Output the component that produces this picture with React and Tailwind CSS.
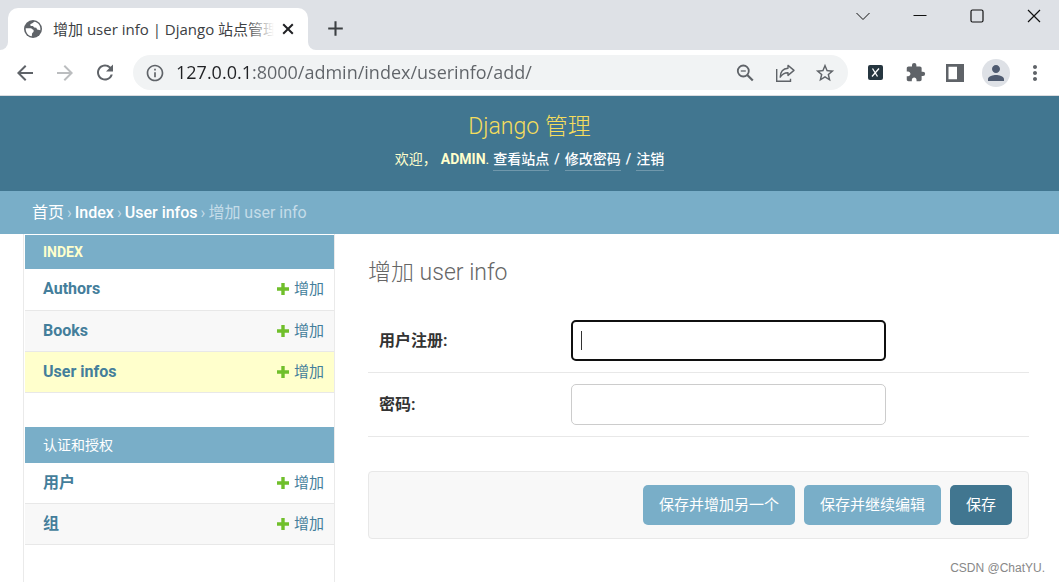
import {
  MdAdd, MdArrowBack, MdArrowForward, MdRefresh, MdInfoOutline,
  MdStarBorder, MdExtension, MdPerson, MdMoreVert,
} from "react-icons/md";

const uiFont = "font-['Open_Sans','Noto_Sans_CJK_SC',sans-serif]";
const siteFont = "font-['Roboto','Noto_Sans_CJK_SC',sans-serif]";

function GlobeIcon() {
  return (
    <svg width="22" height="22" viewBox="0 0 22 22" className="shrink-0">
      <circle cx="11" cy="11" r="9" fill="#5f6368" />
      <path d="M3.700 10.200H8.600c1.300 0 1.600 1.500 3 1.700v1.500c0 1-1.300 1.200-1.500 2.100l-.3 2.800C6.200 17.700 3.500 14.600 3.700 10.200z" fill="#fff" />
      <path d="M12.300 3.800L10.300 5.300 8.300 6.200 8.600 8l2.300.1 1.300 1.500 2.100.2.800 1.700 3.200.7C19 8 16.200 4.300 12.300 3.800z" fill="#fff" />
    </svg>
  );
}

function ZoomOutIcon() {
  return (
    <svg width="20" height="20" viewBox="0 0 20 20" fill="none" stroke="currentColor">
      <circle cx="8.300" cy="8" r="5.500" strokeWidth="1.800" />
      <path d="M5.800 8h5" strokeWidth="1.300" />
      <path d="M12.300 12l5.500 5.500" strokeWidth="2.200" />
    </svg>
  );
}

function ShareIcon() {
  return (
    <svg width="20" height="20" viewBox="0 0 20 20" fill="none" stroke="currentColor" strokeWidth="1.400">
      <path d="M1.700 6v12.300h13.800v-2.500" />
      <path d="M13 2.400l6 5-6 5V9.700c-3.600-.1-6 1.700-7.800 4.500C5.300 9.300 7.800 5.600 13 5.200z" strokeLinejoin="round" />
    </svg>
  );
}

function SidePanelIcon() {
  return (
    <svg width="18" height="18" viewBox="0 0 18 18" fill="currentColor">
      <path fillRule="evenodd" d="M0 0h18v18H0zM2.500 2.800v12.400H11V2.800z" />
    </svg>
  );
}

function PlusIcon() {
  return (
    <svg width="12" height="12" viewBox="0 0 12 12" className="shrink-0">
      <path d="M4.300 0h3.400v4.300H12v3.400H7.700V12H4.300V7.700H0V4.300h4.300z" fill="#70bf2b" />
    </svg>
  );
}

function IconButton({ label, className = "", children }) {
  return (
    <button type="button" aria-label={label} className={`flex h-6 w-6 shrink-0 items-center justify-center ${className}`}>
      {children}
    </button>
  );
}

function TabStrip() {
  return (
    <div className="flex h-[50px] items-start bg-[#dee1e6] text-[#3c4043]">
      <div className="h-[50px] w-2 shrink-0 bg-white">
        <div className="h-full w-full rounded-br-lg bg-[#dee1e6]" />
      </div>
      <div className="flex h-[50px] w-[300px] shrink-0 pt-2">
        <div className="flex w-full items-center rounded-t-[10px] bg-white pr-[14px] pl-[14px]">
          <GlobeIcon />
          <div className="relative ml-[9px] min-w-0 flex-1 overflow-hidden text-[15px] leading-6 whitespace-nowrap">
            增加 user info | Django 站点管理
            <span className="absolute inset-y-0 right-0 w-7 bg-linear-to-r from-transparent to-white" />
          </div>
          <button type="button" aria-label="关闭标签页" className="ml-2 shrink-0 text-[#202124]">
            <svg width="12" height="12" viewBox="0 0 12 12" fill="none" stroke="currentColor" strokeWidth="2"><path d="M1.200 1.200l9.600 9.600M10.800 1.200l-9.600 9.600" /></svg>
          </button>
        </div>
      </div>
      <div className="h-[50px] w-2 shrink-0 bg-white">
        <div className="h-full w-full rounded-bl-lg bg-[#dee1e6]" />
      </div>
      <button type="button" aria-label="新标签页" className="mt-4 ml-[7px]">
        <MdAdd size={25} />
      </button>
      <div className="mt-1 mr-[13px] ml-auto flex gap-[33px] text-[#111111]">
        <IconButton label="搜索标签页">
          <svg width="14" height="14" viewBox="0 0 14 14" fill="none" stroke="currentColor"><path d="M.5 4L7 10.500 13.500 4" /></svg>
        </IconButton>
        <IconButton label="最小化">
          <svg width="14" height="14" viewBox="0 0 14 14" fill="none" stroke="currentColor"><path d="M.5 6.500h13" /></svg>
        </IconButton>
        <IconButton label="最大化">
          <svg width="14" height="14" viewBox="0 0 14 14" fill="none" stroke="currentColor"><rect x="1" y="1" width="12" height="12" rx="1.500" strokeWidth="1.200" /></svg>
        </IconButton>
        <IconButton label="关闭">
          <svg width="14" height="14" viewBox="0 0 14 14" fill="none" stroke="currentColor"><path d="M1 1l12 12M13 1L1 13" strokeWidth="1.200" /></svg>
        </IconButton>
      </div>
    </div>
  );
}

function Toolbar() {
  return (
    <div className="flex h-[46px] items-center border-b border-[#dadce0] bg-white pr-3 pl-[13px] text-[#5f6368]">
      <div className="flex shrink-0 gap-4">
        <IconButton label="后退"><MdArrowBack size={24} /></IconButton>
        <IconButton label="前进" className="text-[#bbbdbf]"><MdArrowForward size={24} /></IconButton>
        <IconButton label="重新加载"><MdRefresh size={25} /></IconButton>
      </div>
      <div className="ml-4 flex h-[35px] min-w-0 flex-1 items-center rounded-full bg-[#f1f3f4] pr-[11px] pl-3">
        <MdInfoOutline size={20} className="shrink-0" />
        <input
          type="text"
          aria-label="地址"
          defaultValue="127.0.0.1:8000/admin/index/userinfo/add/"
          className="ml-[11px] min-w-0 flex-1 bg-[linear-gradient(90deg,#202124_75px,#5f6368_75px)] bg-clip-text pb-[2px] text-[18px] leading-6 text-transparent outline-none"
        />
        <div className="flex shrink-0 gap-4">
          <IconButton label="缩放"><ZoomOutIcon /></IconButton>
          <IconButton label="分享"><ShareIcon /></IconButton>
          <IconButton label="收藏"><MdStarBorder size={22} /></IconButton>
        </div>
      </div>
      <div className="ml-[15px] flex shrink-0 items-center gap-4">
        <IconButton label="扩展 X">
          <span className="flex h-[15px] w-[15px] items-center justify-center rounded-[2px] bg-[#263640] text-white">
            <svg width="9" height="9" viewBox="0 0 9 9" fill="none" stroke="currentColor"><path d="M1.500.5l5 8M8 .5l-7 8" strokeWidth="1.300" /></svg>
          </span>
        </IconButton>
        <IconButton label="扩展程序"><MdExtension size={21} /></IconButton>
        <IconButton label="侧边栏"><SidePanelIcon /></IconButton>
        <button type="button" aria-label="用户" className="-mr-[3px] ml-[-1px] flex h-7 w-7 items-center justify-center rounded-full bg-[#dee1e6] text-[#4f5b70]">
          <MdPerson size={24} />
        </button>
        <IconButton label="更多"><MdMoreVert size={24} /></IconButton>
      </div>
    </div>
  );
}

const headerLink = "border-b border-white/25 pb-px";

function SiteHeader() {
  return (
    <header className="flex h-[95px] flex-col items-center bg-[#417690] pt-[17px] text-[#ffffcc]">
      <h1 className="text-[23px] leading-7 font-light text-[#f5dd5d]"><a href="#home">Django 管理</a></h1>
      <div className="mt-2 flex items-start text-[14px] leading-5">
        <span>欢迎，</span>
        <span className="ml-1"><strong>ADMIN</strong>.</span>
        <nav className="ml-1 flex gap-[5px] font-medium text-white">
          <a href="#site" className={headerLink}>查看站点</a>
          <span>/</span>
          <a href="#password" className={headerLink}>修改密码</a>
          <span>/</span>
          <a href="#logout" className={headerLink}>注销</a>
        </nav>
      </div>
    </header>
  );
}

function Breadcrumbs() {
  return (
    <nav className="flex h-[43px] items-center gap-[3px] bg-[#79aec8] px-8 pt-px text-[16px] text-[#c4dce8]">
      <a href="#home" className="text-white">首页</a>
      <span>›</span>
      <a href="#index" className="font-medium text-white">Index</a>
      <span>›</span>
      <a href="#userinfos" className="font-medium text-white">User infos</a>
      <span>›</span>
      <span>增加 user info</span>
    </nav>
  );
}

const models = [
  { name: "Authors", bg: "bg-white" },
  { name: "Books", bg: "bg-[#f8f8f8]" },
  { name: "User infos", bg: "bg-[#ffffcc]" },
];
const auth = [
  { name: "用户", bg: "bg-white" },
  { name: "组", bg: "bg-[#f8f8f8]" },
];

function Module({ title, titleClass, rows }) {
  return (
    <table className="mb-[34px] w-full border-collapse">
      <caption className={`bg-[#79aec8] px-[18px] text-left text-[14px] ${titleClass}`}>
        <a href="#section">{title}</a>
      </caption>
      <tbody>
        {rows.map((row) => (
          <tr key={row.name} className={`border-b border-[#e8e8e8] ${row.bg}`}>
            <th scope="row" className="h-[41px] pl-[18px] text-left text-[16px] leading-6 font-bold text-[#447e9b]">
              <a href="#list">{row.name}</a>
            </th>
            <td className="pr-[10px] text-[15px] leading-6 text-[#447e9b]">
              <a href="#add" className="flex items-center justify-end gap-[5px]"><PlusIcon />增加</a>
            </td>
          </tr>
        ))}
      </tbody>
    </table>
  );
}

function Field({ id, label, type, focused }) {
  return (
    <div className="flex items-center border-b border-[#e8e8e8] px-[11px] py-[11px]">
      <label htmlFor={id} className="w-48 shrink-0 text-[16px] font-bold text-[#333333]">{label}:</label>
      <div className="relative w-[315px]">
        <input
          id={id}
          type={type}
          className={`block h-[41px] w-full rounded-[5px] bg-white px-2 text-[16px] outline-none ${focused ? "border-2 border-[#101010]" : "border border-[#cccccc]"}`}
        />
        {focused && <span className="absolute top-[11px] left-[10px] h-[19px] w-px bg-[#333333]" />}
      </div>
    </div>
  );
}

const submitClass = "h-10 rounded-[5px] px-4 text-center text-[15px] text-white";

export default function App() {
  return (
    <div className="flex min-h-screen flex-col bg-white">
      <div className={uiFont}>
        <TabStrip />
        <Toolbar />
      </div>
      <div className={`flex flex-1 flex-col ${siteFont}`}>
        <SiteHeader />
        <Breadcrumbs />
        <div className="flex flex-1">
          <aside className="ml-[23px] w-[312px] shrink-0 border-x border-[#eaeaea] pt-px pl-px">
            <Module title="INDEX" titleClass="font-bold leading-[34px] text-[#ffffcc]" rows={models} />
            <Module title="认证和授权" titleClass="leading-9 text-white" rows={auth} />
          </aside>
          <div className="flex min-w-0 flex-1 flex-col pt-[26px] pr-[30px] pl-[33px]">
            <h2 className="mb-[23px] text-[23px] leading-[26px] font-light text-[#666666]">增加 user info</h2>
            <form onSubmit={(e) => e.preventDefault()}>
              <Field id="register" label="用户注册" type="text" focused />
              <Field id="password" label="密码" type="text" />
              <div className="mt-[34px] flex justify-end gap-[9px] rounded-[4px] border border-[#e8e8e8] bg-[#f8f8f8] px-4 py-[13px]">
                <button type="submit" className={`bg-[#79aec8] ${submitClass}`}>保存并增加另一个</button>
                <button type="submit" className={`bg-[#79aec8] ${submitClass}`}>保存并继续编辑</button>
                <button type="submit" className={`bg-[#417690] ${submitClass}`}>保存</button>
              </div>
            </form>
            <p className="mt-auto -mr-4 pb-1 text-right font-['Liberation_Sans',sans-serif] text-[12px] leading-5 text-[#888888]">CSDN @ChatYU.</p>
          </div>
        </div>
      </div>
    </div>
  );
}
